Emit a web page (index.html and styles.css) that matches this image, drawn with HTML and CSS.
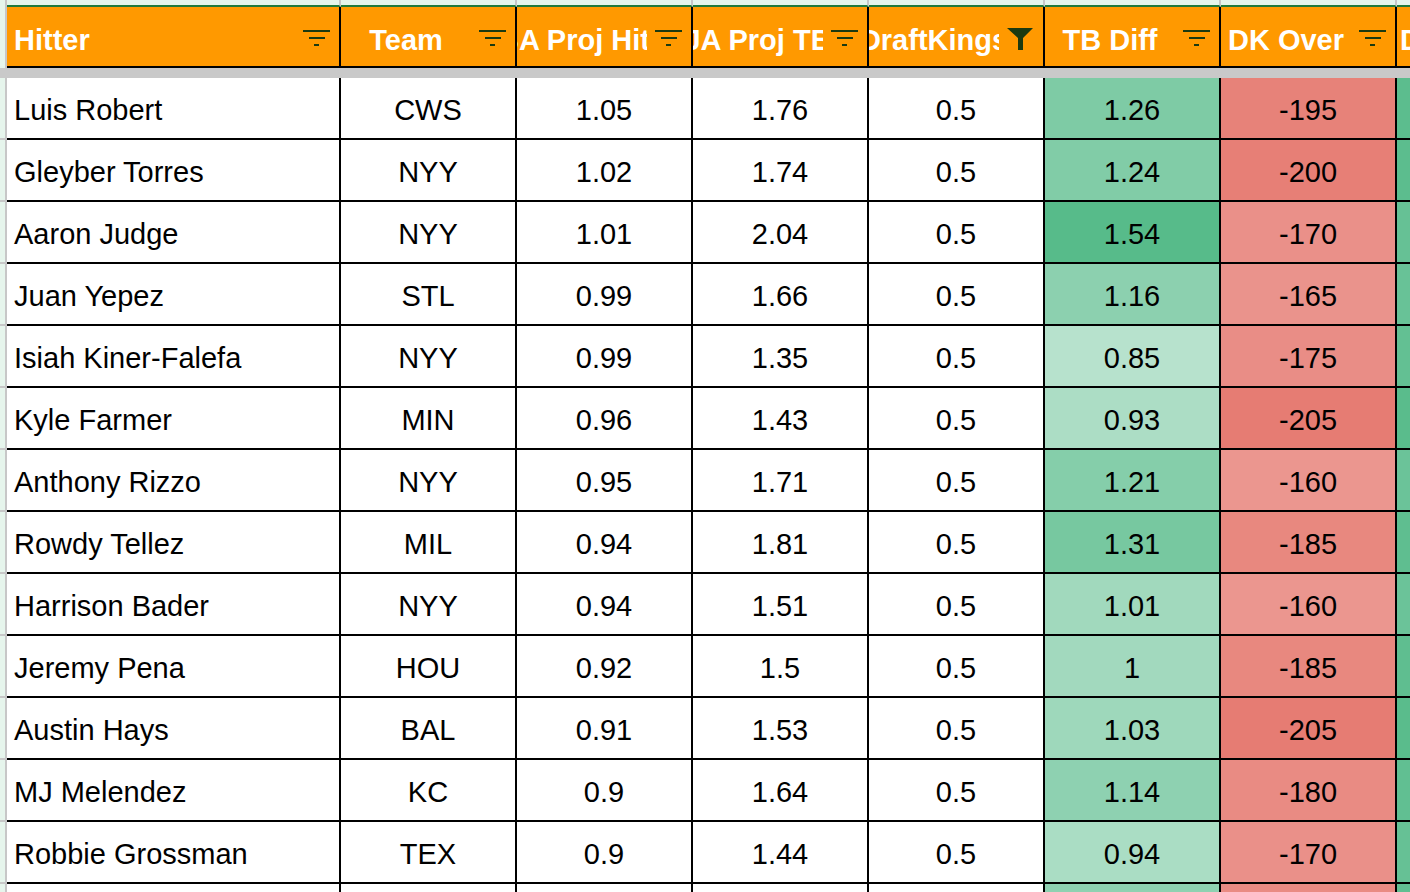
FILE: index.html
```html
<!DOCTYPE html>
<html lang="en">
<head>
<meta charset="utf-8">
<title>Hitters</title>
<link rel="stylesheet" href="styles.css">
</head>
<body>
<div class="sheet">
  <div class="strip gut"></div>
  <div class="strip"></div><div class="strip"></div><div class="strip"></div><div class="strip"></div>
  <div class="strip"></div><div class="strip"></div><div class="strip"></div><div class="strip"></div>

  <div class="hgut"></div>
  <div class="hc first"><div class="lbl"><span>Hitter</span></div><svg class="flt" viewBox="0 0 27 16" width="27" height="16"><rect x="0" y="0" width="27" height="2"/><rect x="6" y="7" width="16" height="2"/><rect x="11" y="14" width="5" height="2"/></svg></div>
  <div class="hc"><div class="lbl"><span>Team</span></div><svg class="flt" viewBox="0 0 27 16" width="27" height="16"><rect x="0" y="0" width="27" height="2"/><rect x="6" y="7" width="16" height="2"/><rect x="11" y="14" width="5" height="2"/></svg></div>
  <div class="hc"><div class="lbl"><span>BA Proj Hits</span></div><svg class="flt" viewBox="0 0 27 16" width="27" height="16"><rect x="0" y="0" width="27" height="2"/><rect x="6" y="7" width="16" height="2"/><rect x="11" y="14" width="5" height="2"/></svg></div>
  <div class="hc"><div class="lbl"><span>JA Proj TB</span></div><svg class="flt" viewBox="0 0 27 16" width="27" height="16"><rect x="0" y="0" width="27" height="2"/><rect x="6" y="7" width="16" height="2"/><rect x="11" y="14" width="5" height="2"/></svg></div>
  <div class="hc"><div class="lbl"><span>DraftKings</span></div><svg class="funnel" viewBox="0 0 27 22" width="27" height="22"><path d="M0 0H26L16 10V22H11V10Z"/></svg></div>
  <div class="hc"><div class="lbl"><span>TB Diff</span></div><svg class="flt" viewBox="0 0 27 16" width="27" height="16"><rect x="0" y="0" width="27" height="2"/><rect x="6" y="7" width="16" height="2"/><rect x="11" y="14" width="5" height="2"/></svg></div>
  <div class="hc"><div class="lbl"><span>DK Over</span></div><svg class="flt" viewBox="0 0 27 16" width="27" height="16"><rect x="0" y="0" width="27" height="2"/><rect x="6" y="7" width="16" height="2"/><rect x="11" y="14" width="5" height="2"/></svg></div>
  <div class="hc"><div class="lbl"><span>DK Odds</span></div><svg class="flt" viewBox="0 0 27 16" width="27" height="16"><rect x="0" y="0" width="27" height="2"/><rect x="6" y="7" width="16" height="2"/><rect x="11" y="14" width="5" height="2"/></svg></div>

  <div class="band"></div>

  <div class="gut"></div><div class="c name">Luis Robert</div><div class="c">CWS</div><div class="c">1.05</div><div class="c">1.76</div><div class="c">0.5</div><div class="c" style="background:#7ecba5">1.26</div><div class="c" style="background:#e78279">-195</div><div class="c" style="background:#5cbd8e">0.66</div>
  <div class="gut"></div><div class="c name">Gleyber Torres</div><div class="c">NYY</div><div class="c">1.02</div><div class="c">1.74</div><div class="c">0.5</div><div class="c" style="background:#81cca7">1.24</div><div class="c" style="background:#e77f76">-200</div><div class="c" style="background:#5cbd8e">0.67</div>
  <div class="gut"></div><div class="c name">Aaron Judge</div><div class="c">NYY</div><div class="c">1.01</div><div class="c">2.04</div><div class="c">0.5</div><div class="c" style="background:#57bb8a">1.54</div><div class="c" style="background:#ea9089">-170</div><div class="c" style="background:#66c195">0.63</div>
  <div class="gut"></div><div class="c name">Juan Yepez</div><div class="c">STL</div><div class="c">0.99</div><div class="c">1.66</div><div class="c">0.5</div><div class="c" style="background:#8cd0af">1.16</div><div class="c" style="background:#ea938c">-165</div><div class="c" style="background:#68c297">0.62</div>
  <div class="gut"></div><div class="c name">Isiah Kiner-Falefa</div><div class="c">NYY</div><div class="c">0.99</div><div class="c">1.35</div><div class="c">0.5</div><div class="c" style="background:#b7e2cd">0.85</div><div class="c" style="background:#e98d86">-175</div><div class="c" style="background:#63c093">0.64</div>
  <div class="gut"></div><div class="c name">Kyle Farmer</div><div class="c">MIN</div><div class="c">0.96</div><div class="c">1.43</div><div class="c">0.5</div><div class="c" style="background:#acddc5">0.93</div><div class="c" style="background:#e67c73">-205</div><div class="c" style="background:#5abc8c">0.67</div>
  <div class="gut"></div><div class="c name">Anthony Rizzo</div><div class="c">NYY</div><div class="c">0.95</div><div class="c">1.71</div><div class="c">0.5</div><div class="c" style="background:#85ceaa">1.21</div><div class="c" style="background:#eb968f">-160</div><div class="c" style="background:#6bc399">0.62</div>
  <div class="gut"></div><div class="c name">Rowdy Tellez</div><div class="c">MIL</div><div class="c">0.94</div><div class="c">1.81</div><div class="c">0.5</div><div class="c" style="background:#77c8a0">1.31</div><div class="c" style="background:#e8887f">-185</div><div class="c" style="background:#5fbe90">0.65</div>
  <div class="gut"></div><div class="c name">Harrison Bader</div><div class="c">NYY</div><div class="c">0.94</div><div class="c">1.51</div><div class="c">0.5</div><div class="c" style="background:#a1d9bd">1.01</div><div class="c" style="background:#eb968f">-160</div><div class="c" style="background:#6bc399">0.62</div>
  <div class="gut"></div><div class="c name">Jeremy Pena</div><div class="c">HOU</div><div class="c">0.92</div><div class="c">1.5</div><div class="c">0.5</div><div class="c" style="background:#a2d9be">1</div><div class="c" style="background:#e8887f">-185</div><div class="c" style="background:#5fbe90">0.65</div>
  <div class="gut"></div><div class="c name">Austin Hays</div><div class="c">BAL</div><div class="c">0.91</div><div class="c">1.53</div><div class="c">0.5</div><div class="c" style="background:#9ed8bb">1.03</div><div class="c" style="background:#e67c73">-205</div><div class="c" style="background:#5abc8c">0.67</div>
  <div class="gut"></div><div class="c name">MJ Melendez</div><div class="c">KC</div><div class="c">0.9</div><div class="c">1.64</div><div class="c">0.5</div><div class="c" style="background:#8ed1b1">1.14</div><div class="c" style="background:#e98b83">-180</div><div class="c" style="background:#61bf92">0.64</div>
  <div class="gut"></div><div class="c name">Robbie Grossman</div><div class="c">TEX</div><div class="c">0.9</div><div class="c">1.44</div><div class="c">0.5</div><div class="c" style="background:#aaddc4">0.94</div><div class="c" style="background:#ea9089">-170</div><div class="c" style="background:#66c195">0.63</div>
  <div class="gut"></div><div class="c name">Josh Bell</div><div class="c">WSH</div><div class="c">0.89</div><div class="c">1.60</div><div class="c">0.5</div><div class="c" style="background:#8ed1b1">1.13</div><div class="c" style="background:#e98b83">-180</div><div class="c" style="background:#61bf92">0.64</div>
</div>
</body>
</html>
```
FILE: styles.css
```css
* {
  box-sizing: border-box;
}

html,
body {
  margin: 0;
  overflow: hidden;
  background: #ffffff;
}

body {
  font-family: "Liberation Sans", Arial, sans-serif;
  font-size: 29px;
  color: #000000;
}

.sheet {
  display: grid;
  grid-template-columns: 7px 334px repeat(7, 176px);
  grid-template-rows: 7px 61px 10px;
  grid-auto-rows: 62px;
  width: max-content;
}

.strip {
  background: #e6f5ec;
  border-right: 2px solid #c7c7c7;
  border-bottom: 2px solid #217a3c;
}

.strip.gut {
  border-bottom: none;
}

.hgut {
  background: #e6f5ec;
  border-right: 2px solid #c7c7c7;
}

.hc {
  background: #ff9900;
  color: #ffffff;
  font-weight: bold;
  border-right: 2px solid #000000;
  border-bottom: 2px solid #000000;
  display: flex;
  align-items: center;
  padding: 3px 9px 0 0;
  min-width: 0;
}

.lbl {
  flex: 1;
  min-width: 0;
  margin-right: 8px;
  padding-top: 4px;
  overflow: hidden;
  white-space: nowrap;
  display: flex;
  justify-content: center;
}

.lbl span {
  flex: none;
}

.hc.first .lbl {
  justify-content: flex-start;
  padding-left: 7px;
}

.flt,
.funnel {
  flex: none;
  fill: #1b3a10;
}

.funnel {
  margin-top: 2px;
}

.band {
  grid-column: 1 / -1;
  background: #c9c9c9;
}

.gut {
  background: #e6f5ec;
  border-right: 2px solid #c7c7c7;
  border-bottom: 2px solid #c7c7c7;
}

.c {
  border-right: 2px solid #000000;
  border-bottom: 2px solid #000000;
  display: flex;
  align-items: center;
  justify-content: center;
  padding-top: 5px;
  white-space: nowrap;
  overflow: hidden;
  min-width: 0;
}

.c.name {
  justify-content: flex-start;
  padding-left: 7px;
}
```
